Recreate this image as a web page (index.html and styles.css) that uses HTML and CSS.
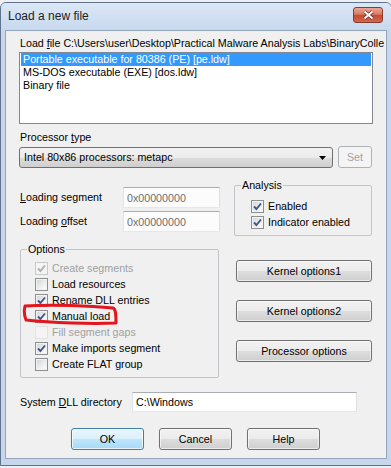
FILE: index.html
```html
<!DOCTYPE html>
<html lang="en">
<head>
    <meta charset="UTF-8">
    <title>Load a new file</title>
    <link rel="stylesheet" href="styles.css">
</head>
<body>
<div class="window">
    <div class="titlebar">
        <span class="title">Load a new file</span>
        <span class="close-btn">
            <svg width="13" height="10" viewBox="0 0 13 10">
                <path d="M2.5 1.5 L10.5 8.5 M10.5 1.5 L2.5 8.5" stroke="#6d2a20" stroke-width="3.6"/>
                <path d="M2.5 1.5 L10.5 8.5 M10.5 1.5 L2.5 8.5" stroke="#fff" stroke-width="2"/>
            </svg>
        </span>
    </div>
    <div class="client">
        <div class="load-file">Load <u>f</u>ile C:\Users\user\Desktop\Practical Malware Analysis Labs\BinaryColle</div>

        <div class="listbox">
            <div class="item sel">Portable executable for 80386 (PE) [pe.ldw]</div>
            <div class="item">MS-DOS executable (EXE) [dos.ldw]</div>
            <div class="item">Binary file</div>
        </div>

        <div class="proc-label">Processor <u>t</u>ype</div>
        <div class="proc-row">
            <div class="combo">
                <span>Intel 80x86 processors: metapc</span>
                <svg width="7" height="4" viewBox="0 0 7 4"><path d="M0 0 H7 L3.5 4 Z" fill="#000"/></svg>
            </div>
            <button class="btn set" disabled>Set</button>
        </div>

        <div class="seg-row">
            <div class="seg-fields">
                <div class="field">
                    <label class="field-label"><u>L</u>oading segment</label>
                    <input class="edit hex" type="text" value="0x00000000" readonly>
                </div>
                <div class="field">
                    <label class="field-label">Loading <u>o</u>ffset</label>
                    <input class="edit hex" type="text" value="0x00000000" readonly>
                </div>
            </div>
            <fieldset class="group analysis">
                <legend>Analysis</legend>
                <div class="chk-row"><span class="box on"><svg viewBox="0 0 11 11"><path d="M2 5.5 L4.4 8 L9 2.5"/></svg></span>Enabled</div>
                <div class="chk-row"><span class="box on"><svg viewBox="0 0 11 11"><path d="M2 5.5 L4.4 8 L9 2.5"/></svg></span>Indicator enabled</div>
            </fieldset>
        </div>

        <div class="opt-row">
            <fieldset class="group options">
                <legend>Options</legend>
                <div class="chk-row off"><span class="box on dis"><svg viewBox="0 0 11 11"><path d="M2 5.5 L4.4 8 L9 2.5"/></svg></span>Create segments</div>
                <div class="chk-row"><span class="box"></span>Load resources</div>
                <div class="chk-row"><span class="box on"><svg viewBox="0 0 11 11"><path d="M2 5.5 L4.4 8 L9 2.5"/></svg></span>Rename DLL entries</div>
                <div class="chk-row marked">
                    <span class="box on"><svg viewBox="0 0 11 11"><path d="M2 5.5 L4.4 8 L9 2.5"/></svg></span>Manual load
                    <svg class="scribble" width="98" height="26" viewBox="0 0 98 26">
                        <path d="M3 3 C30 1 70 3 91 5 C94 6 94 13 94 20 C70 21 30 20 4 17 C2 12 2 7 3 3 Z"/>
                    </svg>
                </div>
                <div class="chk-row off"><span class="box dis faint"></span>Fill segment gaps</div>
                <div class="chk-row"><span class="box on"><svg viewBox="0 0 11 11"><path d="M2 5.5 L4.4 8 L9 2.5"/></svg></span>Make imports segment</div>
                <div class="chk-row"><span class="box"></span>Create FLAT group</div>
            </fieldset>
            <div class="opt-buttons">
                <button class="btn">Kernel options1</button>
                <button class="btn">Kernel options2</button>
                <button class="btn">Processor options</button>
            </div>
        </div>

        <div class="dll-row">
            <label class="dll-label">System <u>D</u>LL directory</label>
            <input class="edit dll" type="text" value="C:\Windows">
        </div>

        <div class="actions">
            <button class="btn default">OK</button>
            <button class="btn">Cancel</button>
            <button class="btn">Help</button>
        </div>
    </div>
</div>
</body>
</html>
```

FILE: styles.css
```css
body {
    margin: 0;
    overflow: hidden;
    background: #eef0f3;
    font-family: "Liberation Sans", Arial, sans-serif;
    font-size: 10.7px;
    line-height: 13px;
    color: #000;
}
.window {
    box-sizing: border-box;
    width: 392px;
    margin-top: 2px;
    border: 1px solid #5f738c;
    border-radius: 6px 6px 0 0;
    background: #c6d7ec;
    padding: 0 4px 6px 4px;
}
.titlebar {
    display: flex;
    justify-content: space-between;
    height: 27px;
    margin: 0 -4px;
    padding: 0 8px 0 7px;
    border-radius: 5px 5px 0 0;
    background: linear-gradient(#dbe7f6, #c8d9ee);
}
.title {
    font-size: 12px;
    line-height: 27px;
    color: #222;
}
.close-btn {
    box-sizing: border-box;
    display: flex;
    align-items: center;
    justify-content: center;
    width: 30px;
    height: 16px;
    margin-top: 4px;
    border: 1px solid #8b3a2e;
    border-radius: 3px;
    background: linear-gradient(#eba797, #d97b64 45%, #c54b31 52%, #d06650);
}
.client {
    height: 427px;
    overflow: hidden;
    border: 1px solid #93a6bd;
    background: #f0f0f0;
}
.load-file {
    margin: 6px 0 0 14px;
    white-space: nowrap;
}
.listbox {
    box-sizing: border-box;
    width: 354px;
    height: 72px;
    margin: 2px 0 0 13px;
    padding: 0 1px;
    border: 1px solid #828790;
    background: #fff;
}
.item {
    height: 13px;
    padding-left: 2px;
    white-space: nowrap;
}
.item.sel {
    background: #3399ff;
    color: #fff;
}
.proc-label {
    margin: 7px 0 0 14px;
}
.proc-row {
    display: flex;
    margin: 2px 0 0 13px;
}
.combo {
    box-sizing: border-box;
    display: flex;
    align-items: center;
    justify-content: space-between;
    width: 314px;
    height: 21px;
    margin-top: 1px;
    padding: 0 6px 0 4px;
    border: 1px solid #707070;
    border-radius: 3px;
    background: linear-gradient(#f2f2f2, #ebebeb 50%, #dddddd 51%, #cfcfcf);
}
.btn {
    box-sizing: border-box;
    height: 22px;
    padding: 0;
    border: 1px solid #707070;
    border-radius: 3px;
    background: linear-gradient(#f2f2f2, #ebebeb 50%, #dddddd 51%, #cfcfcf);
    box-shadow: inset 0 0 0 1px rgba(255,255,255,0.6);
    font: inherit;
    color: #000;
}
.btn.set {
    width: 34px;
    margin-left: 5px;
    border-color: #adb2b5;
    background: #f4f4f4;
    box-shadow: none;
    color: #a3a3a3;
}
.btn.default {
    border-color: #3c7fb1;
    background: linear-gradient(#eaf6fd, #d9f0fc 50%, #bee6fd 51%, #a7d9f5);
    box-shadow: inset 0 0 0 1px rgba(255,255,255,0.7);
}
.seg-row {
    display: flex;
    align-items: flex-start;
    margin-top: 11px;
    padding-left: 14px;
}
.seg-fields {
    display: flex;
    flex-direction: column;
    gap: 3px;
    width: 200px;
    padding-top: 8px;
}
.field {
    display: flex;
    align-items: center;
}
.field-label {
    width: 103px;
}
.edit {
    box-sizing: border-box;
    margin: 0;
    padding: 0 0 0 3px;
    border: 1px solid;
    border-color: #abadb3 #dbdfe6 #e3e9ef #e2e3ea;
    background: #fff;
    font: inherit;
    color: #000;
    outline: none;
}
.edit.hex {
    width: 97px;
    height: 21px;
    background: #fcfcfc;
    color: #6d6d6d;
}
.group {
    box-sizing: border-box;
    margin: 0;
    padding: 0;
    border: 1px solid #c2c6ca;
    border-radius: 2px;
}
.group legend {
    margin-left: 6px;
    padding: 0 1px;
    line-height: 13px;
}
.analysis {
    width: 138px;
    margin-left: 14px;
    padding: 6px 0 5px 0;
}
.analysis .chk-row {
    margin-left: 16px;
}
.chk-row {
    position: relative;
    display: flex;
    align-items: center;
    gap: 4px;
    height: 16px;
    white-space: nowrap;
}
.chk-row.off {
    color: #a0a0a0;
}
.box {
    box-sizing: border-box;
    display: flex;
    align-items: center;
    justify-content: center;
    width: 13px;
    height: 13px;
    border: 1px solid #8e8f8f;
    background: linear-gradient(135deg, #cfd2d6, #f7f7f7 75%);
    box-shadow: inset 0 0 0 1px #f2f2f2;
}
.box svg {
    width: 11px;
    height: 11px;
}
.box svg path {
    fill: none;
    stroke: #44578c;
    stroke-width: 1.9;
}
.box.dis {
    border-color: #c9c9c9;
    background: #f4f4f4;
    box-shadow: none;
}
.box.dis svg path {
    stroke: #b0b0b0;
}
.box.faint {
    border-color: #e2e2e2;
}
.opt-row {
    display: flex;
    align-items: flex-start;
    margin-top: 7px;
    padding-left: 14px;
}
.options {
    width: 199px;
    padding: 4px 0 5px 0;
}
.options .chk-row {
    margin-left: 14px;
}
.scribble {
    position: absolute;
    left: -13px;
    top: -5px;
}
.scribble path {
    fill: none;
    stroke: #e2161c;
    stroke-width: 3;
    stroke-linejoin: round;
}
.opt-buttons {
    display: flex;
    flex-direction: column;
    gap: 18px;
    width: 136px;
    margin-left: 17px;
    padding-top: 17px;
}
.dll-row {
    display: flex;
    align-items: center;
    margin-top: 14px;
    padding-left: 14px;
}
.dll-label {
    width: 112px;
}
.edit.dll {
    width: 225px;
    height: 20px;
}
.actions {
    display: flex;
    gap: 15px;
    margin-top: 16px;
    padding-left: 65px;
}
.actions .btn {
    width: 73px;
}
```
